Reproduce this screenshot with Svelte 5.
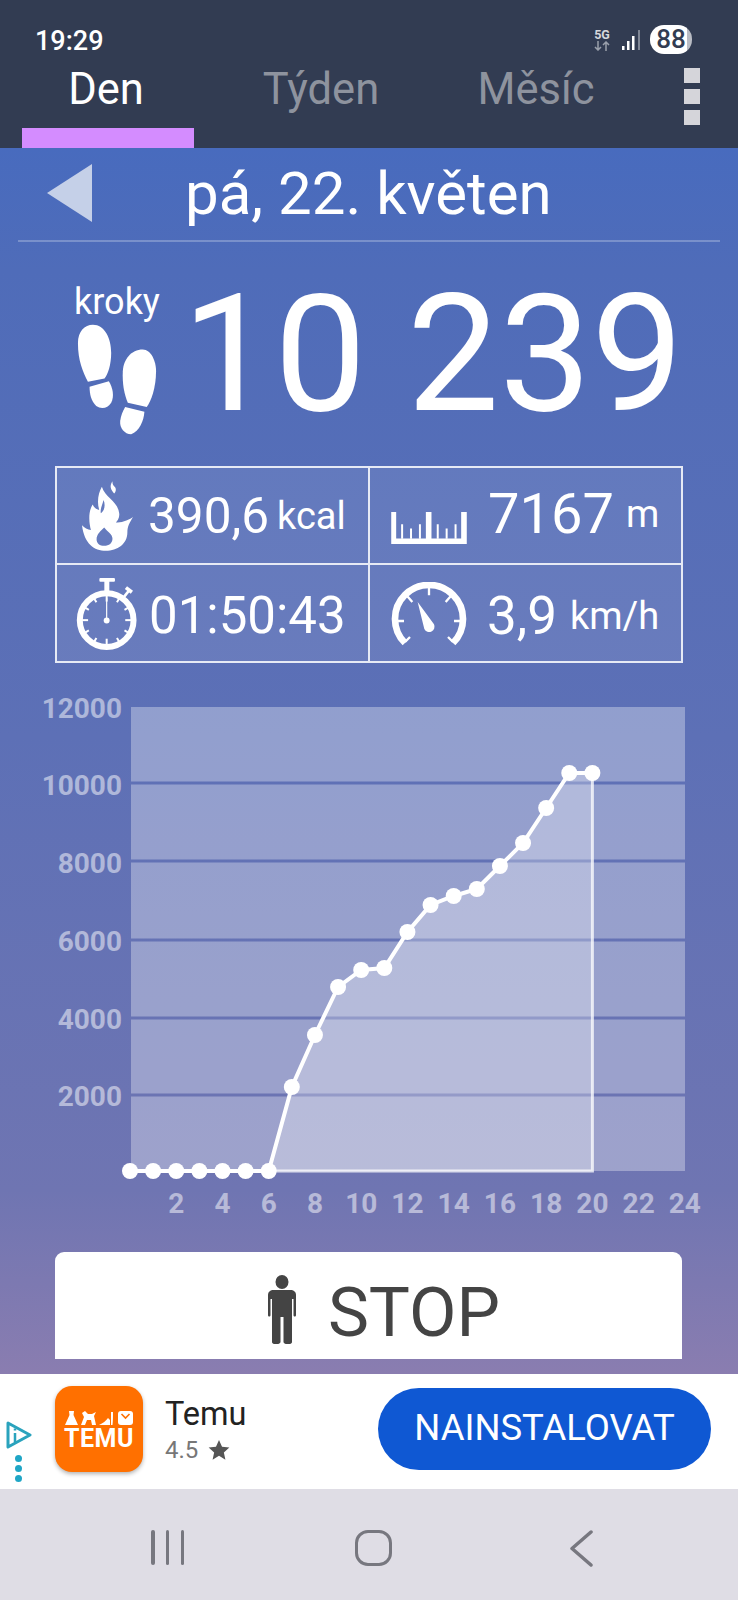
<script>
  const ys = [1170,1170,1170,1170,1170,1170,1170,1086,1034,986,969,967,931,904,895,888,865,842,807,772,772];
  const pts = ys.map((y, i) => ({ x: 130 + i * 23.12, y }));
  const line = pts.map((p) => `${p.x},${p.y}`).join(' ');
  const area = pts.slice(6).map((p) => `${p.x},${p.y}`).join(' ');
  const last = pts[pts.length - 1];
  const start = pts[6];
  const bands = [
    [706, 74.5], [783.5, 75], [861.5, 76], [940.5, 75], [1018.5, 74], [1095.5, 74.5]
  ];
  const yLabels = [[12000, 707], [10000, 784], [8000, 862], [6000, 940], [4000, 1018], [2000, 1095]];
  const xLabels = [2,4,6,8,10,12,14,16,18,20,22,24];
  const ticks = [-120,-90,-60,-30,0,30,60,90,120,150,180,210];
</script>

<div class="phone">
  <header class="top">
    <div class="status">
      <span class="time">19:29</span>
      <div class="sys">
        <div class="net">
          <span class="fiveg">5G</span>
          <svg viewBox="0 0 18 10" width="18" height="10">
            <path d="M5 0V9M2 6L5 9L8 6M13 10V1M10 4L13 1L16 4" fill="none" stroke="#9aa0ab" stroke-width="1.500"/>
          </svg>
        </div>
        <svg class="signal" viewBox="0 0 20 21" width="20" height="21">
          <rect x="0" y="16" width="2.500" height="4" fill="#fff"/>
          <rect x="5" y="11" width="2.500" height="9" fill="#fff"/>
          <rect x="10" y="6" width="2.500" height="14" fill="#fff"/>
          <rect x="16" y="0" width="2" height="20" fill="#7f8695"/>
        </svg>
        <div class="battery">88</div>
      </div>
    </div>
    <nav class="tabs">
      <div class="tab active"><span>Den</span></div>
      <div class="tab"><span>Týden</span></div>
      <div class="tab"><span>Měsíc</span></div>
      <div class="menu"><i></i><i></i><i></i></div>
    </nav>
  </header>

  <main class="main">
    <div class="date">
      <div class="back"></div>
      <h1>pá, 22. květen</h1>
    </div>

    <div class="steps">
      <div class="steps-side">
        <span class="kroky">kroky</span>
        <svg class="feet" viewBox="50 5 245 340" width="82" height="113">
          <path fill="#fff" d="M100 10C135 10 155 50 155 95C155 130 145 160 135 172L85 182C70 150 55 120 55 65C55 30 75 10 100 10Z"/>
          <path fill="#fff" d="M90 197L148 180C160 200 165 225 155 245C145 262 125 265 110 255C95 240 90 220 90 197Z"/>
          <path fill="#fff" d="M250 85C275 85 290 120 290 150C290 200 275 240 262 258L205 245C195 220 188 190 190 150C192 115 215 85 250 85Z"/>
          <path fill="#fff" d="M197 258L255 272C253 300 240 330 215 340C195 340 180 320 182 300C184 285 190 270 197 258Z"/>
        </svg>
      </div>
      <div class="count">10 239</div>
    </div>

    <div class="stats">
      <div class="cell c1">
        <svg class="ic-fire" viewBox="68 35 154 210" width="51" height="70">
          <path fill="#fff" fill-rule="evenodd" d="M128 52C138 85 175 95 180 130C183 145 175 155 170 160C185 160 205 155 222 143C212 160 205 170 205 190C205 225 175 245 140 245C105 245 75 225 68 168C75 175 85 182 95 182C90 165 85 130 100 105C105 115 112 120 120 122C112 95 118 70 128 52ZM135 175C125 185 112 195 112 210C112 223 122 230 135 230C150 230 160 222 160 208C160 195 145 188 135 175ZM133 92C130 105 122 120 125 132C135 125 140 108 133 92Z"/>
          <path fill="#fff" d="M160 35C150 50 155 60 165 72C172 65 172 55 165 50C160 45 160 40 160 35Z"/>
        </svg>
        <span class="val">390,6</span><span class="unit">kcal</span>
      </div>
      <div class="cell c2">
        <svg class="ic-ruler" viewBox="33 135 229 97" width="76" height="32">
          <path fill="#fff" d="M33 135H48V215H138V135H155V215H245V135H262V232H33Z"/>
          <path stroke="#fff" stroke-width="6" d="M66 172V216M93 185V216M120 172V216M174 172V216M201 185V216M228 172V216"/>
        </svg>
        <span class="val">7167</span><span class="unit">m</span>
      </div>
      <div class="cell c3">
        <svg class="ic-watch" viewBox="48 322 186 220" width="62" height="73">
          <circle cx="140" cy="452" r="81" fill="none" stroke="#fff" stroke-width="18"/>
          <rect x="118" y="325" width="47" height="11" rx="3" fill="#fff"/>
          <rect x="133" y="334" width="15" height="32" fill="#fff"/>
          <path stroke="#fff" stroke-width="8" d="M190 385L208 362"/>
          <path stroke="#fff" stroke-width="11" d="M198 354L216 368" />
          {#each ticks as t}
            <line x1="140" y1="374" x2="140" y2={t % 90 === 0 ? 396 : 390} stroke="#fff" stroke-width="6" transform="rotate({t} 140 452)"/>
          {/each}
          <path stroke="#fff" stroke-width="3.500" d="M140 385V450"/>
          <circle cx="140" cy="453" r="9" fill="#fff"/>
        </svg>
        <span class="val">01:50:43</span>
      </div>
      <div class="cell c4">
        <svg class="ic-gauge" viewBox="30 335 234 195" width="78" height="65">
          <path fill="none" stroke="#fff" stroke-width="20" d="M75 518A102 102 0 1 1 219 518"/>
          <path stroke="#fff" stroke-width="7" fill="none" d="M147 350V375M82 378L97 395M212 378L197 395M50 452H72M244 452H222M75 515L90 500M219 515L204 500"/>
          <path fill="#fff" d="M113 395L162 462A16 16 0 1 1 133 476Z"/>
        </svg>
        <span class="val">3,9</span><span class="unit">km/h</span>
      </div>
    </div>

    <svg class="chart" viewBox="0 690 738 530" width="738" height="530">
      {#each bands as b}
        <rect x="131" y={b[0]} width="554" height={b[1]} fill="#fff" fill-opacity="0.33"/>
      {/each}
      <polygon points="{start.x},1170 {area} {last.x},1170" fill="#fff" fill-opacity="0.28"/>
      <path d="M{start.x} 1170H{last.x}V{last.y}" fill="none" stroke="#fff" stroke-opacity="0.75" stroke-width="3"/>
      <polyline points={line} fill="none" stroke="#fff" stroke-width="4"/>
      {#each pts as p}
        <circle cx={p.x} cy={p.y} r="8" fill="#fff"/>
      {/each}
      {#each yLabels as l}
        <text class="axis" x="122" y={l[1] + 9.5} text-anchor="end">{l[0]}</text>
      {/each}
      {#each xLabels as h}
        <text class="axis" x={130 + h * 23.12} y="1211.5" text-anchor="middle">{h}</text>
      {/each}
    </svg>

    <button class="stop">
      <svg viewBox="0 0 28 69" width="28" height="69">
        <ellipse cx="14" cy="7" rx="6.500" ry="7" fill="#444"/>
        <path fill="#444" d="M6 15H22C26 15 28 17 28 20V40C28 42 25.500 42 25.500 40V24H24V67C24 70 16 70 15.500 67V42H12.500V67C12 70 4 70 4 67V24H2.500V40C2.500 42 0 42 0 40V20C0 17 2 15 6 15Z"/>
      </svg>
      <span>STOP</span>
    </button>
  </main>

  <aside class="ad">
    <div class="adchoice">
      <svg viewBox="0 0 26 28" width="26" height="28">
        <path d="M2 2L24 14L2 26Z" fill="none" stroke="#2aa3bd" stroke-width="3" stroke-linejoin="round"/>
        <path d="M9 12V21M9 7.500V9.500" stroke="#2aa3bd" stroke-width="2.500"/>
      </svg>
      <div class="dots"><i></i><i></i><i></i></div>
    </div>
    <div class="app-icon">
      <svg viewBox="0 0 68 16" width="68" height="16">
        <path fill="#fff" d="M4 0H9L8.500 4L13 14H0L4.500 4Z"/>
        <path fill="#fff" d="M17 2L20 0L23 3H27L31 1L29 5L31 14L27 14L26 9H22L20 14H16L19 6Z"/>
        <path fill="#fff" d="M34 14C38 12 41 10 43 7L45 9V14ZM46 14V1H48C48 6 48 10 47.500 14Z"/>
        <rect x="53" y="0" width="15" height="14" rx="3" fill="#fff"/>
        <path d="M56.500 3L60.500 7L64.500 3" fill="none" stroke="#ff7000" stroke-width="1.600"/>
      </svg>
      <span>TEMU</span>
    </div>
    <div class="app-info">
      <span class="name">Temu</span>
      <div class="rate">
        <span>4.5</span>
        <svg viewBox="0 0 24 24" width="22" height="22"><path fill="#555" d="M12 1l3.300 7.400 8 .8-6 5.400 1.700 7.900L12 18.400 5 22.500l1.700-7.900-6-5.400 8-.8Z"/></svg>
      </div>
    </div>
    <button class="install">NAINSTALOVAT</button>
  </aside>

  <footer class="nav">
    <div class="bars"><i></i><i></i><i></i></div>
    <div class="home"></div>
    <svg class="chev" viewBox="0 0 24 37" width="24" height="37"><path d="M22 2L3 18.500L22 35" fill="none" stroke="#77777f" stroke-width="3.500" stroke-linecap="round" stroke-linejoin="round"/></svg>
  </footer>
</div>

<style>
  :global(body) { margin: 0; }
  * { box-sizing: border-box; }
  .phone {
    width: 738px; height: 1600px; display: flex; flex-direction: column;
    font-family: Roboto, "Liberation Sans", sans-serif; overflow: hidden;
  }
  .top { height: 148px; background: #323c52; flex: none; }
  .status {
    height: 66px; display: flex; justify-content: space-between; align-items: flex-start;
    padding: 25px 46px 0 35px; color: #fff;
  }
  .time { font-size: 27px; font-weight: 500; line-height: 30px; margin-top: 1px; }
  .sys { display: flex; align-items: flex-start; }
  .net { width: 18px; margin-top: 3px; margin-right: 11px; display: flex; flex-direction: column; align-items: center; color: #d5d7dc; }
  .fiveg { font-size: 12.500px; font-weight: 700; line-height: 13px; }
  .signal { margin-top: 5px; margin-right: 8px; }
  .battery {
    width: 42px; height: 29px; margin-top: 0; border-radius: 14px;
    background: linear-gradient(90deg, #fff 88%, #b9bcc4 88%);
    color: #323c52; font-size: 26px; font-weight: 500; line-height: 29px; text-align: center;
  }
  .tabs { height: 82px; display: flex; gap: 43px; padding-left: 22px; }
  .tab {
    width: 172px; height: 82px; color: #8e939e; font-size: 43.500px; line-height: 48px; text-align: center;
  }
  .tab span { position: relative; left: -2px; }
  .tab.active { color: #fff; border-bottom: 20px solid #d48cff; }
  .menu { margin-left: 17px; padding-top: 2px; display: flex; flex-direction: column; gap: 6px; }
  .menu i { display: block; width: 16px; height: 15px; background: #d5d5da; }

  .main {
    height: 1226px; flex: none; display: flex; flex-direction: column;
    background: linear-gradient(180deg, #486bbe 0%, #4f6cb9 10%, #5d70b6 48%, #6f75b2 85%, #8a7db0 100%);
  }
  .date {
    height: 94px; margin: 0 18px; display: flex; align-items: flex-start;
    border-bottom: 2px solid rgba(255,255,255,0.25); position: relative;
  }
  .back {
    margin-top: 16px; margin-left: 29px; width: 0; height: 0;
    border-top: 29.500px solid transparent; border-bottom: 29.500px solid transparent;
    border-right: 45px solid #c5d0e8;
  }
  h1 {
    margin: 8px 0 0 93px; font-size: 60px; font-weight: 400; line-height: 76px; color: #fff; white-space: nowrap;
  }
  .steps { height: 225px; display: flex; padding-left: 74px; }
  .steps-side { width: 90px; display: flex; flex-direction: column; }
  .kroky { font-size: 36px; color: #fff; line-height: 40px; margin-top: 40px; }
  .feet { margin-top: 1px; margin-left: 2px; }
  .count { font-size: 164px; line-height: 166px; color: #fff; margin-top: 29px; margin-left: 18px; white-space: nowrap; }

  .stats {
    margin: -1px 0 0 55px; width: 628px; height: 197px; display: grid;
    grid-template-columns: 313px 311px; grid-template-rows: 97px 96px;
    border: 2px solid #e6eaf5;
    flex: none;
  }
  .cell { display: flex; align-items: center; background: rgba(255,255,255,0.085); color: #fff; position: relative; }
  .c1, .c3 { border-right: 2px solid #e6eaf5; }
  .c1, .c2 { border-bottom: 2px solid #e6eaf5; }
  .val { font-size: 49.500px; line-height: 50px; white-space: nowrap; }
  .unit { font-size: 38px; line-height: 50px; margin-left: 8px; white-space: nowrap; }
  .c1 { padding-left: 25px; }
  .c1 .val { margin-left: 15px; }
  .c2 { padding-left: 21px; }
  .c2 .val { margin-left: 21px; font-size: 56px; margin-top: -3px; }
  .c2 .unit { margin-left: 12px; margin-top: -3px; }
  .c2 .ic-ruler { margin-top: 24px; }
  .c3 { padding-left: 19px; }
  .c3 .val { margin-left: 11px; font-size: 51px; margin-top: 5px; }
  .c4 { padding-left: 20px; }
  .c4 .ic-gauge { margin-top: 2px; }
  .c4 .val { margin-left: 19px; font-size: 53px; margin-top: 5px; }
  .c4 .unit { margin-top: 5px; margin-left: 13px; }

  .chart { display: block; margin-top: 28px; flex: none; }
  .axis { font-size: 28px; font-weight: 700; fill: #fff; fill-opacity: 0.5; font-family: Roboto, sans-serif; }

  .stop {
    margin: 31px 0 0 55px; width: 627px; height: 107px; flex: none; border: 0; padding: 0 0 0 31px;
    background: #fff; border-radius: 9px 9px 0 0; display: flex; align-items: center; justify-content: center; gap: 32px;
    font-family: inherit; color: #444; font-size: 69px;
  }
  .stop svg { margin-top: 7px; }
  .stop span { line-height: 70px; margin-top: 15px; }

  .ad { height: 115px; flex: none; background: #fff; display: flex; align-items: flex-start; position: relative; }
  .adchoice { width: 55px; padding: 47px 0 0 6px; display: flex; flex-direction: column; }
  .dots { margin: 6px 0 0 9px; display: flex; flex-direction: column; gap: 3px; }
  .dots i { display: block; width: 7px; height: 7px; border-radius: 50%; background: #1fa6c6; }
  .app-icon {
    width: 88px; height: 86px; margin-top: 12px; border-radius: 17px; background: #ff7000;
    box-shadow: 0 2px 4px rgba(0,0,0,0.3); display: flex; flex-direction: column; align-items: center;
    padding-top: 25px; color: #fff; font-weight: 700; font-size: 25px; line-height: 22px;
  }
  .app-icon span { margin-top: 1px; letter-spacing: .5px; }
  .app-info { margin-left: 22px; padding-top: 22px; width: 213px; display: flex; flex-direction: column; }
  .name { font-size: 32.500px; line-height: 36px; color: #222; }
  .rate { display: flex; align-items: center; gap: 10px; margin-top: 3px; color: #777; font-size: 24px; line-height: 30px; }
  .install {
    width: 333px; height: 82px; margin-top: 14px; border: 0; border-radius: 41px; background: #0f58d3;
    color: #fff; font-family: inherit; font-size: 36.500px; padding: 0 0 4px;
  }

  .nav { height: 111px; flex: none; background: #dfdde5; display: flex; align-items: flex-start; padding-top: 41px; }
  .bars { margin-left: 151px; width: 33px; height: 35px; display: flex; justify-content: space-between; }
  .bars i { display: block; width: 3.500px; height: 35px; background: #77777f; border-radius: 2px; }
  .home { margin-left: 171px; width: 37px; height: 36px; border: 3.500px solid #77777f; border-radius: 13px; }
  .chev { margin-left: 177px; }
</style>
